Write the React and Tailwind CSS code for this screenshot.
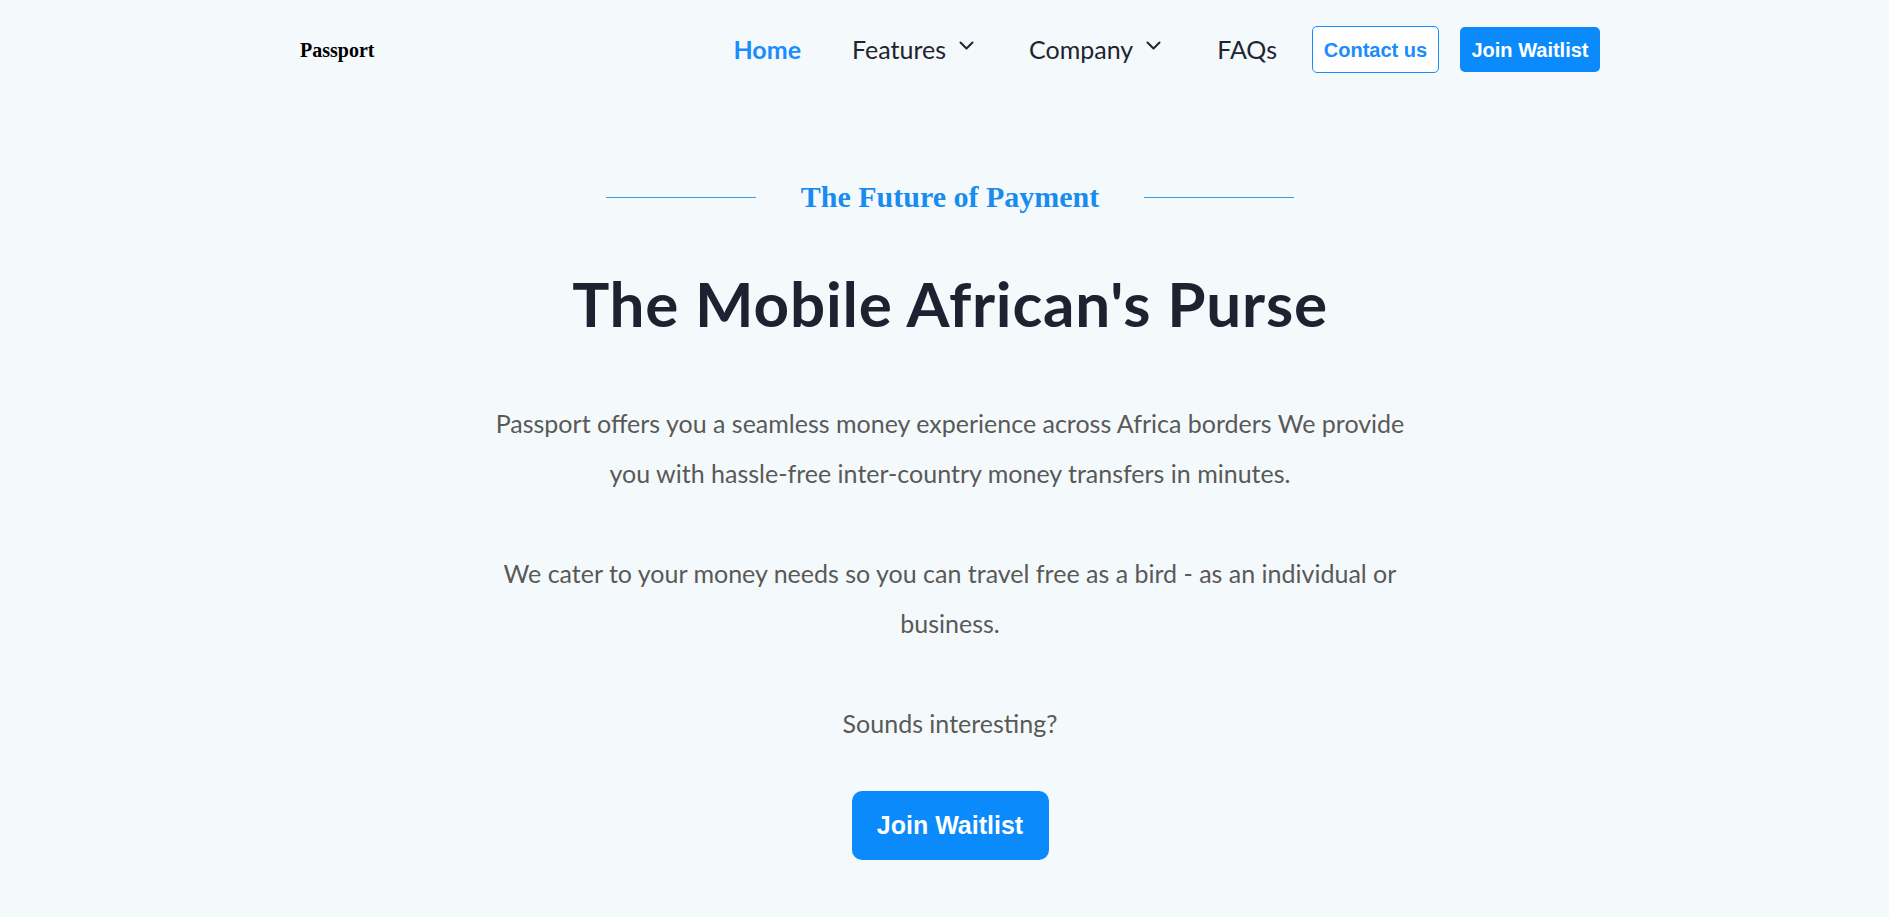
import React from 'react';

function Chevron() {
  return (
    <svg width="15" height="9" viewBox="0 0 15 9" fill="none" className="ml-[13px] mb-[8px]">
      <path d="M1.5 1.5 L7.5 7.5 L13.5 1.5" stroke="#1f2430" strokeWidth="2" strokeLinecap="round" strokeLinejoin="round" />
    </svg>
  );
}

export default function App() {
  return (
    <div className="min-h-screen bg-[#f4f9fc] font-['Lato',sans-serif]">
      <div className="w-[1300px] ml-[300px]">
        {/* Navbar */}
        <header className="h-[99px] flex items-center justify-between">
          <div className="font-['Liberation_Serif',serif] font-bold text-[20px] text-black">Passport</div>
          <nav className="flex items-center text-[25px] text-[#1f2430]">
            <a className="font-bold text-[#1a8cfd]">Home</a>
            <a className="ml-[51px] flex items-center">Features <Chevron /></a>
            <a className="ml-[55px] flex items-center">Company <Chevron /></a>
            <a className="ml-[56px]">FAQs</a>
            <button className="ml-[35px] h-[47px] w-[127px] rounded-[5px] border border-[#1a8cfd] bg-white font-['Liberation_Sans',sans-serif] text-[20px] font-bold text-[#1a8cfd]">
              Contact us
            </button>
            <button className="ml-[21px] h-[45px] w-[140px] rounded-[5px] bg-[#0b8bfb] font-['Liberation_Sans',sans-serif] text-[20px] font-bold text-white">
              Join Waitlist
            </button>
          </nav>
        </header>

        {/* Hero */}
        <main className="flex flex-col items-center text-center">
          <div className="mt-[80px] flex items-center">
            <span className="h-px w-[150px] bg-[#3b9be9]"></span>
            <span className="mx-[45px] font-['Liberation_Serif',serif] text-[30px] leading-[36px] font-bold text-[#1a8cf0]">
              The Future of Payment
            </span>
            <span className="h-px w-[150px] bg-[#3b9be9]"></span>
          </div>
          <h1 className="mt-[57px] text-[62px] leading-[62px] tracking-[0.8px] font-bold text-[#1c2230]">
            The Mobile African's Purse
          </h1>
          <div className="mt-[64px] w-[935px] text-[25px] leading-[50px] text-[#595959]">
            <p className="mb-[50px]">
              Passport offers you a seamless money experience across Africa borders We provide you with hassle-free inter-country money transfers in minutes.
            </p>
            <p className="mb-[50px]">
              We cater to your money needs so you can travel free as a bird - as an individual or business.
            </p>
            <p>Sounds interesting?</p>
          </div>
          <button className="mt-[43px] h-[69px] w-[197px] rounded-[10px] bg-[#0b8bfb] font-['Liberation_Sans',sans-serif] text-[25px] font-bold text-white">
            Join Waitlist
          </button>
        </main>
      </div>
    </div>
  );
}
